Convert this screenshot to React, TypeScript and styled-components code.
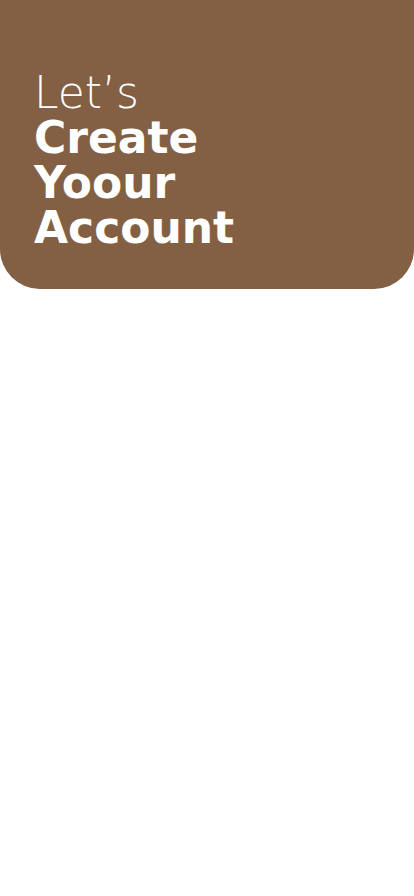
import React from "react";
import styled, { createGlobalStyle } from "styled-components";

const Global = createGlobalStyle`
  html, body { margin: 0; padding: 0; background: #ffffff; }
  body { font-family: "DejaVu Sans", "Noto Sans", sans-serif; }
`;

const Page = styled.div`
  width: 414px;
  min-height: 896px;
  background: #ffffff;
  display: flex;
  flex-direction: column;
`;

const Header = styled.header`
  box-sizing: border-box;
  width: 414px;
  height: 289px;
  background: #835f43;
  border-radius: 0 0 40px 40px;
  padding: 70px 0 0 34px;
  display: flex;
  flex-direction: column;
`;

const Line = styled.div<{ $light?: boolean }>`
  font-family: "DejaVu Sans", "Noto Sans", sans-serif;
  font-size: 44px;
  line-height: 45px;
  font-weight: ${(p) => (p.$light ? 200 : 700)};
  color: #ffffff;
  letter-spacing: 0;
  white-space: nowrap;
`;

export default function App() {
  return (
    <>
      <Global />
      <Page>
        <Header>
          <Line $light>Let’s</Line>
          <Line>Create</Line>
          <Line>Yoour</Line>
          <Line>Account</Line>
        </Header>
      </Page>
    </>
  );
}
